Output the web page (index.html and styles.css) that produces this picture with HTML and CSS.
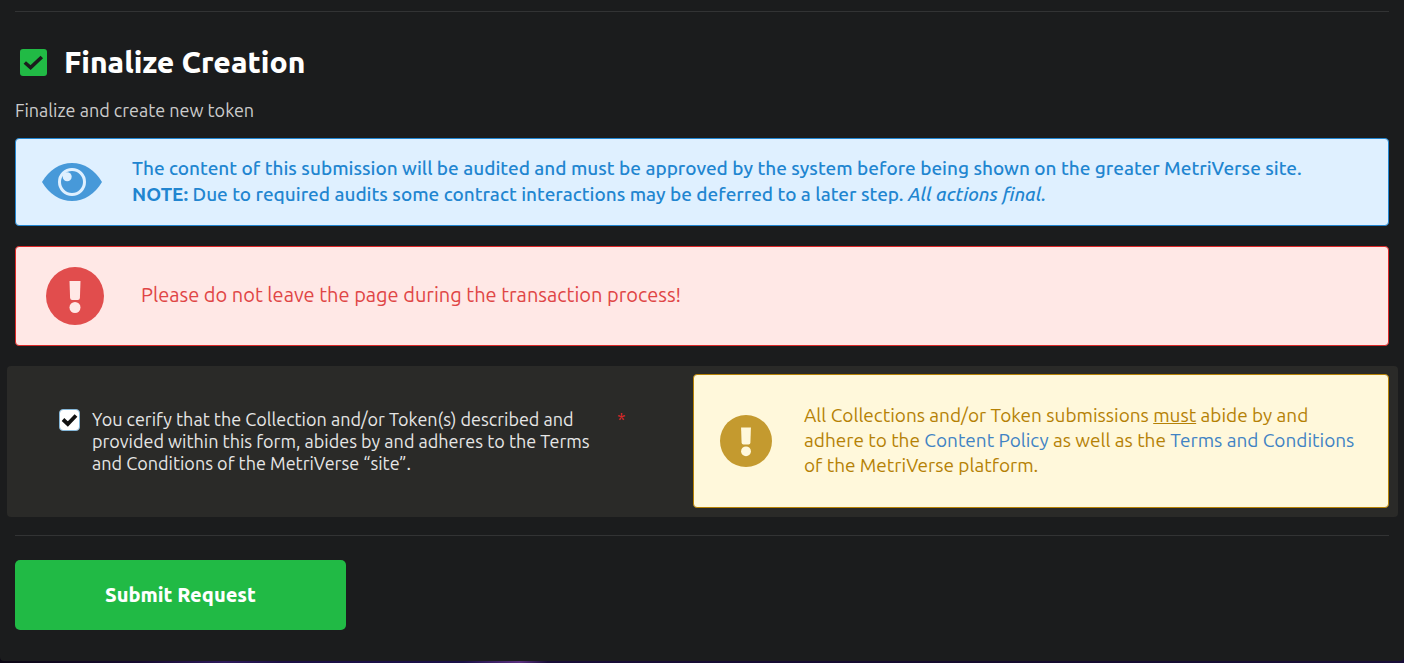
FILE: index.html
```html
<!DOCTYPE html>
<html lang="en">
<head>
<meta charset="utf-8">
<title>Finalize Creation</title>
<link rel="stylesheet" href="styles.css">
</head>
<body>
<main class="sheet">
  <form class="form">
    <hr class="rule">
    <h2 class="title">
      <svg class="title-icon" viewBox="0 0 27 27" aria-hidden="true"><rect width="27" height="27" rx="3" fill="#21ba45"/><path d="M4.8 13.500 10.600 18.600 21.800 8" fill="none" stroke="#1b1c1d" stroke-width="3.600"/></svg>
      Finalize Creation
    </h2>
    <p class="subtitle">Finalize and create new token</p>

    <section class="message info">
      <svg class="eye" viewBox="0 0 60 38" aria-hidden="true"><path d="M0 19C7 7 18 0 30 0s23 7 30 19C53 31 42 38 30 38S7 31 0 19Z" fill="#4799d9"/><circle cx="30" cy="19" r="12.5" fill="#4799d9" stroke="#dff0ff" stroke-width="3"/><circle cx="25.200" cy="13.800" r="4.500" fill="#dff0ff"/></svg>
      <p class="message-text">The content of this submission will be audited and must be approved by the system before being shown on the greater MetriVerse site.<br><strong>NOTE:</strong> Due to required audits some contract interactions may be deferred to a later step. <em>All actions final.</em></p>
    </section>

    <section class="message error">
      <svg class="alert-icon" viewBox="0 0 58 58" aria-hidden="true"><circle cx="29" cy="29" r="29" fill="#e14d4d"/><path d="M23.500 14h11l-.6 17q-.2 2-2 2h-5.800q-1.800 0-2-2Z" fill="#ffe8e6"/><circle cx="29" cy="40.500" r="5.500" fill="#ffe8e6"/></svg>
      <p class="message-text">Please do not leave the page during the transaction process!</p>
    </section>

    <section class="agreement">
      <div class="consent">
        <span class="check">
          <input class="check-input" type="checkbox" id="agree" checked required>
          <svg class="check-mark" viewBox="0 0 21 22" aria-hidden="true"><path d="M4 10.500 8.800 15 17 6.500" fill="none" stroke="#111" stroke-width="3.800"/></svg>
        </span>
        <label class="consent-label" for="agree">You cerify that the Collection and/or Token(s) described and provided within this form, abides by and adheres to the Terms and Conditions of the MetriVerse “site”.</label>
        <span class="required">*</span>
      </div>
      <div class="message warning">
        <svg class="alert-icon" viewBox="0 0 58 58" aria-hidden="true"><circle cx="29" cy="29" r="29" fill="#c49a2f"/><path d="M23.500 14h11l-.6 17q-.2 2-2 2h-5.800q-1.800 0-2-2Z" fill="#fff8db"/><circle cx="29" cy="40.500" r="5.500" fill="#fff8db"/></svg>
        <p class="message-text">All Collections and/or Token submissions <u>must</u> abide by and adhere to the <a class="link" href="#policy">Content Policy</a> as well as the <a class="link" href="#terms">Terms and Conditions</a> of the MetriVerse platform.</p>
      </div>
    </section>

    <hr class="rule">
    <button class="submit" type="submit">Submit Request</button>
  </form>
</main>
</body>
</html>
```
FILE: styles.css
```css
* { box-sizing: border-box; }

body {
  margin: 0;
  min-height: 100vh;
  background: linear-gradient(90deg, #0c0614 0%, #160a30 10%, #2d1a5c 16%, #1c0f45 20%, #1a1048 33%, #5a3080 37%, #180c38 39%, #140a2c 70%, #180d38 100%);
  color: #fff;
  font-family: Ubuntu, "Noto Sans", sans-serif;
  font-size: 19px;
}

.sheet {
  padding: 11px 15px 31px;
  background: #1b1c1d;
  border-radius: 0 0 4px 4px;
}

.form { display: flex; flex-direction: column; }

.rule {
  width: 100%;
  height: 1px;
  margin: 0;
  border: 0;
  background: #323334;
}

.title {
  display: flex;
  align-items: center;
  gap: 17px;
  margin: 30px 0 0;
  padding-left: 5px;
  font-size: 30px;
  line-height: 40px;
  font-weight: 800;
}

.title-icon { width: 27px; height: 27px; }

.subtitle {
  margin: 16px 0 0;
  color: #ccc;
  font-size: 18px;
  line-height: 24px;
}

.message {
  display: flex;
  align-items: center;
  border: 1px solid;
  border-radius: 4px;
}

.message svg { flex: none; }
.message-text { margin: 0; padding-bottom: 2px; line-height: 26px; }

.info {
  gap: 30px;
  min-height: 88px;
  margin-top: 16px;
  padding: 0 26px;
  background: #dff0ff;
  border-color: #2185d0;
  color: #2185d0;
  font-weight: 500;
}

.eye { width: 60px; height: 38px; }

.error {
  gap: 37px;
  min-height: 100px;
  margin-top: 20px;
  padding: 0 30px;
  background: #ffe8e6;
  border-color: #db2828;
  color: #e04545;
  font-size: 20px;
}

.error .alert-icon { width: 58px; height: 58px; }

.agreement {
  display: grid;
  grid-template-columns: minmax(0, 686fr) minmax(0, 696fr);
  margin: 20px -9px 18px -8px;
  padding: 8px 9px 9px 0;
  background: #2a2a28;
  border-radius: 4px;
}

.consent {
  display: grid;
  grid-template-columns: 21px 1fr 76px;
  align-items: start;
  padding: 34px 0 34px 52px;
}

.check { display: grid; margin-top: 1px; }
.check-input, .check-mark { grid-area: 1 / 1; width: 21px; height: 22px; }

.check-input {
  appearance: none;
  margin: 0;
  background: #fff;
  border: 1px solid #85b7d9;
  border-radius: 4px;
}

.check-mark { pointer-events: none; }

.consent-label {
  padding: 0 24px 0 12px;
  color: #e6e6e6;
  font-size: 18px;
  line-height: 22px;
}

.required { color: #db2828; font-size: 18px; line-height: 22px; }

.warning {
  gap: 32px;
  min-height: 134px;
  padding: 0 26px;
  background: #fff8db;
  border-color: #b58105;
  color: #b58105;
}

.warning .alert-icon { width: 52px; height: 52px; }
.warning .message-text { line-height: 25px; }
.link { color: #4183c4; text-decoration: none; }

.submit {
  align-self: flex-start;
  width: 331px;
  max-width: 100%;
  height: 70px;
  margin-top: 24px;
  padding: 0 0 2px;
  border: 0;
  border-radius: 5px;
  background: #21ba45;
  color: #fff;
  font: inherit;
  font-size: 20px;
  font-weight: 800;
}
```
